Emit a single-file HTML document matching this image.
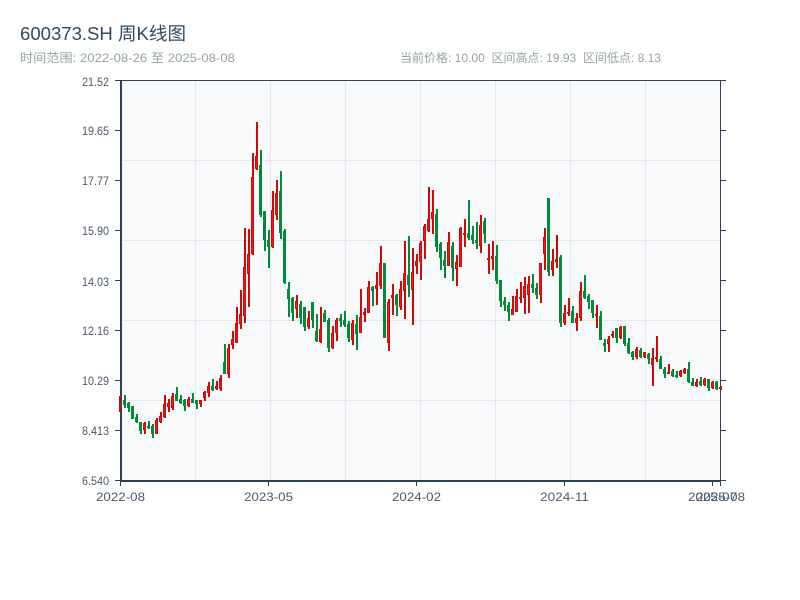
<!DOCTYPE html>
<html lang="zh"><head><meta charset="utf-8"><title>600373.SH 周K线图</title>
<style>html,body{margin:0;padding:0;background:#fff}svg{display:block}
text{font-family:"Liberation Sans","Noto Sans CJK SC",sans-serif}
.a{font-size:12px;fill:#4b5a6b}
.s{font-size:12px;fill:#95a3a4}
</style></head><body>
<svg width="800" height="600" viewBox="0 0 800 600" xmlns="http://www.w3.org/2000/svg">
<rect width="800" height="600" fill="#fff"/>
<text x="20" y="40" font-size="18" fill="#34495e" textLength="166" lengthAdjust="spacingAndGlyphs">600373.SH 周K线图</text>
<text class="s" x="20" y="62" textLength="215" lengthAdjust="spacingAndGlyphs">时间范围: 2022-08-26 至 2025-08-08</text>
<text class="s" x="400" y="62" textLength="261" lengthAdjust="spacingAndGlyphs">当前价格: 10.00 &#160;区间高点: 19.93 &#160;区间低点: 8.13</text>
<rect x="120" y="80" width="600" height="400" fill="#f8f9fb"/>
<path fill="none" stroke="#e5e7ec" d="M120 160.5H720M120 240.5H720M120 320.5H720M120 400.5H720M195.5 80V480M270.5 80V480M345.5 80V480M420.5 80V480M495.5 80V480M570.5 80V480M645.5 80V480"/>
<path fill="none" stroke="#2f4056" d="M120 80.5H720.5M720.5 80V481M115 80.5H120M115 130.5H120M115 180.5H120M115 230.5H120M115 280.5H120M115 330.5H120M115 380.5H120M115 430.5H120M115 480.5H120M720 80.5H726M720 130.5H726M720 180.5H726M720 230.5H726M720 280.5H726M720 330.5H726M720 380.5H726M720 430.5H726M720 480.5H726M120.5 481V486M268.5 481V486M416.5 481V486M564.5 481V486M712.5 481V486M720.5 481V486"/>
<path fill="none" stroke="#2f4056" stroke-width="2" d="M121 80V482M120 481H721"/>
<path fill="none" stroke="#008a3a" stroke-width="2" d="M125 395V408M129 402V412M133 406V419M137 414V423M141 422V434M149 421V429M153 424V438M177 387V401M181 395V404M185 399V411M193 393V403M197 400V409M213 379V391M225 344V374M261 150V217M265 211V251M269 230V268M281 171V239M285 229V284M289 282V317M293 297V321M301 301V324M305 307V331M313 302V328M317 314V342M325 310V322M329 318V352M341 314V327M345 311V327M349 321V342M357 315V350M373 286V306M385 263V338M397 294V316M409 236V297M437 209V252M441 242V270M445 251V278M453 242V281M469 200V240M473 226V244M477 222V249M485 218V243M497 245V284M501 280V307M505 297V311M509 302V321M533 274V293M537 283V299M549 198V276M561 255V327M573 306V323M585 275V299M589 294V309M593 300V318M601 311V340M605 339V352M617 328V343M625 326V346M629 338V354M633 351V360M641 348V358M649 353V364M661 356V369M665 367V378M673 369V377M677 371V378M689 362V383M693 378V386M701 377V386M709 379V391M717 381V390"/>
<path fill="none" stroke="#008a3a" stroke-width="3" d="M124.500 400V405M128.500 403V408M132.500 406V419M136.500 417V422M140.500 422V431M148.500 426V428M152.500 426V434M176.500 394V401M180.500 399V403M184.500 400V406M192.500 399V403M196.500 400V404M212.500 386V390M224.500 362V374M260.500 165V215M264.500 211V240M268.500 240V247M280.500 191V233M284.500 231V283M288.500 289V299M292.500 298V313M300.500 304V318M304.500 307V327M312.500 302V320M316.500 331V341M324.500 313V322M328.500 320V348M340.500 318V321M344.500 320V325M348.500 324V338M356.500 324V334M372.500 287V291M384.500 263V338M396.500 295V305M408.500 275V285M436.500 214V247M440.500 244V258M444.500 260V266M452.500 246V268M468.500 233V238M472.500 235V240M476.500 240V243M484.500 221V234M496.500 256V281M500.500 280V301M504.500 301V305M508.500 305V312M532.500 284V288M536.500 288V295M548.500 198V272M560.500 257V323M572.500 311V323M584.500 291V298M588.500 296V302M592.500 300V313M600.500 316V340M604.500 343V346M616.500 328V338M624.500 326V344M628.500 343V353M632.500 352V357M640.500 350V357M648.500 354V359M660.500 359V369M664.500 369V374M672.500 371V376M676.500 375V377M688.500 369V382M692.500 382V386M700.500 381V385M708.500 379V388M716.500 382V389"/>
<path fill="none" stroke="#cc0a0a" stroke-width="2" d="M120 396V412M145 422V434M157 418V434M161 412V423M165 395V418M169 399V412M173 393V410M189 397V407M201 400V407M205 391V401M209 382V397M217 381V390M221 375V391M229 344V378M233 331V349M237 307V343M241 290V329M245 228V323M249 229V307M253 153V255M257 122V170M273 191V248M277 180V220M297 295V318M309 311V329M321 307V343M333 326V349M337 318V341M353 320V345M361 289V333M365 308V322M369 281V313M377 272V305M381 246V289M389 299V351M393 284V315M401 281V310M405 241V319M413 248V325M417 254V274M421 241V280M425 224V259M429 187V232M433 190V234M449 232V266M457 255V286M461 227V267M465 219V247M481 215V253M489 244V274M493 241V270M513 296V315M517 289V312M521 282V303M525 277V314M529 276V313M541 263V303M545 228V270M553 249V276M557 235V268M565 305V325M569 298V316M577 313V331M581 282V321M597 305V328M609 336V352M613 331V338M621 326V339M637 347V359M645 352V358M653 348V386M657 336V362M669 364V374M681 370V377M685 368V374M697 379V387M705 378V386M713 381V389M721 386V390"/>
<path fill="#f2141e" stroke="#cc0a0a" d="M143.500 423.500h2V429.500h-2zM155.500 420.500h2V433.500h-2zM159.500 416.500h2V421.500h-2zM163.500 404.500h2V416.500h-2zM167.500 403.500h2V406.500h-2zM171.500 396.500h2V407.500h-2zM187.500 399.500h2V405.500h-2zM199.500 400.500h2V403.500h-2zM203.500 392.500h2V397.500h-2zM207.500 386.500h2V392.500h-2zM215.500 386.500h2V388.500h-2zM219.500 378.500h2V388.500h-2zM227.500 348.500h2V373.500h-2zM231.500 339.500h2V344.500h-2zM235.500 323.500h2V342.500h-2zM239.500 314.500h2V323.500h-2zM243.500 267.500h2V315.500h-2zM247.500 254.500h2V273.500h-2zM251.500 177.500h2V253.500h-2zM255.500 156.500h2V168.500h-2zM271.500 210.500h2V246.500h-2zM275.500 193.500h2V214.500h-2zM295.500 301.500h2V308.500h-2zM307.500 318.500h2V326.500h-2zM319.500 329.500h2V341.500h-2zM331.500 333.500h2V347.500h-2zM335.500 320.500h2V332.500h-2zM351.500 323.500h2V339.500h-2zM359.500 317.500h2V332.500h-2zM363.500 312.500h2V314.500h-2zM367.500 287.500h2V312.500h-2zM375.500 285.500h2V288.500h-2zM379.500 263.500h2V285.500h-2zM387.500 302.500h2V342.500h-2zM391.500 295.500h2V297.500h-2zM399.500 289.500h2V306.500h-2zM403.500 273.500h2V290.500h-2zM411.500 272.500h2V289.500h-2zM415.500 261.500h2V265.500h-2zM419.500 243.500h2V261.500h-2zM423.500 226.500h2V240.500h-2zM427.500 219.500h2V230.500h-2zM431.500 212.500h2V218.500h-2zM447.500 242.500h2V265.500h-2zM455.500 262.500h2V268.500h-2zM459.500 228.500h2V266.500h-2zM463.500 233.500h2V234.500h-2zM479.500 225.500h2V245.500h-2zM487.500 258.500h2V259.500h-2zM491.500 256.500h2V258.500h-2zM511.500 309.500h2V314.500h-2zM515.500 296.500h2V311.500h-2zM519.500 297.500h2V298.500h-2zM523.500 286.500h2V297.500h-2zM527.500 284.500h2V294.500h-2zM539.500 263.500h2V294.500h-2zM543.500 237.500h2V253.500h-2zM551.500 261.500h2V269.500h-2zM555.500 259.500h2V261.500h-2zM563.500 313.500h2V322.500h-2zM567.500 312.500h2V313.500h-2zM575.500 318.500h2V322.500h-2zM579.500 291.500h2V317.500h-2zM595.500 314.500h2V315.500h-2zM607.500 339.500h2V343.500h-2zM611.500 334.500h2V335.500h-2zM619.500 327.500h2V337.500h-2zM635.500 349.500h2V356.500h-2zM643.500 352.500h2V356.500h-2zM651.500 358.500h2V364.500h-2zM655.500 357.500h2V358.500h-2zM667.500 372.500h2V373.500h-2zM679.500 371.500h2V375.500h-2zM683.500 369.500h2V372.500h-2zM695.500 382.500h2V385.500h-2zM703.500 379.500h2V384.500h-2zM711.500 382.500h2V387.500h-2zM719.500 387.500h2V388.500h-2z"/>
<g class="a" text-anchor="end">
<text x="109" y="86" textLength="27" lengthAdjust="spacingAndGlyphs">21.52</text>
<text x="109" y="135" textLength="27" lengthAdjust="spacingAndGlyphs">19.65</text>
<text x="109" y="185" textLength="27" lengthAdjust="spacingAndGlyphs">17.77</text>
<text x="109" y="235" textLength="27" lengthAdjust="spacingAndGlyphs">15.90</text>
<text x="109" y="286" textLength="27" lengthAdjust="spacingAndGlyphs">14.03</text>
<text x="109" y="335" textLength="27" lengthAdjust="spacingAndGlyphs">12.16</text>
<text x="109" y="385" textLength="27" lengthAdjust="spacingAndGlyphs">10.29</text>
<text x="109" y="435" textLength="27" lengthAdjust="spacingAndGlyphs">8.413</text>
<text x="109" y="485" textLength="27" lengthAdjust="spacingAndGlyphs">6.540</text>
</g>
<g class="a">
<text x="96" y="501" textLength="49" lengthAdjust="spacingAndGlyphs">2022-08</text>
<text x="244" y="501" textLength="49" lengthAdjust="spacingAndGlyphs">2023-05</text>
<text x="392" y="501" textLength="49" lengthAdjust="spacingAndGlyphs">2024-02</text>
<text x="540" y="501" textLength="49" lengthAdjust="spacingAndGlyphs">2024-11</text>
<text x="688" y="501" textLength="49" lengthAdjust="spacingAndGlyphs">2025-07</text>
<text x="696" y="501" textLength="49" lengthAdjust="spacingAndGlyphs">2025-08</text>
</g>
</svg>
</body></html>
